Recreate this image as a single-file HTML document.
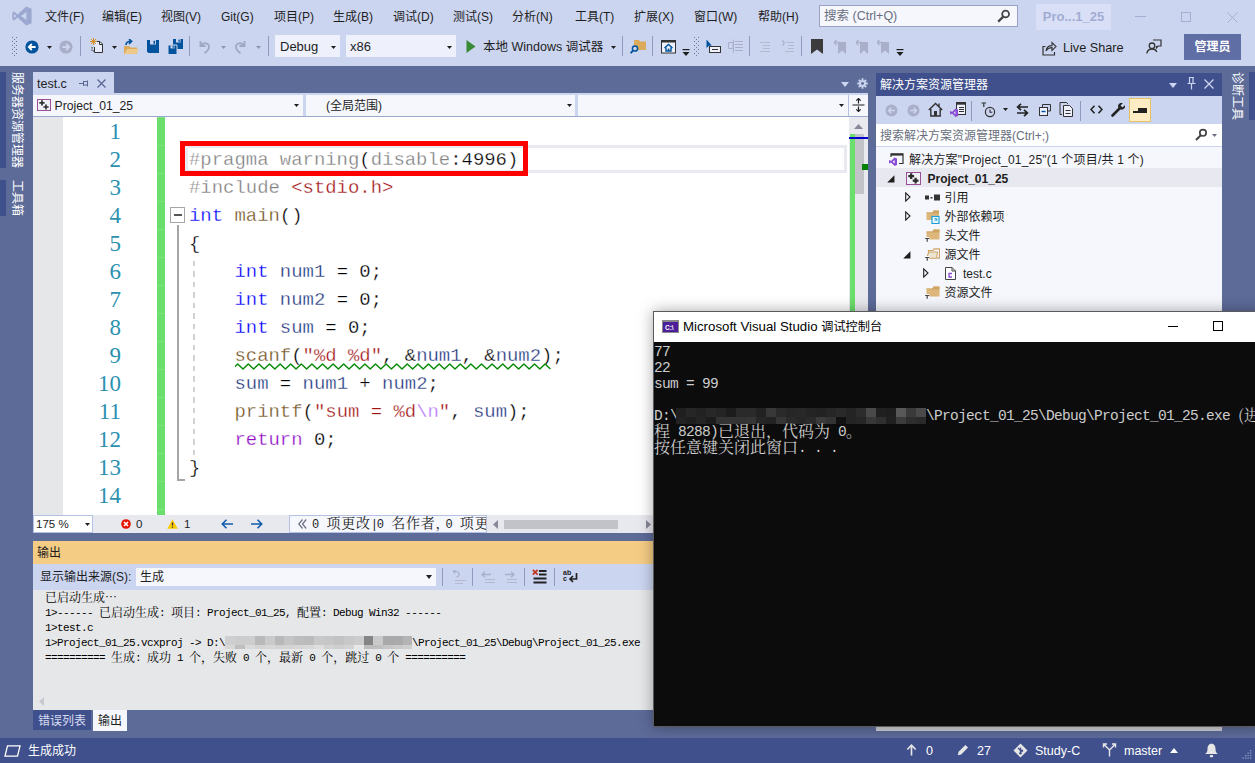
<!DOCTYPE html>
<html lang="zh-CN">
<head>
<meta charset="utf-8">
<title>Project_01_25 - Microsoft Visual Studio</title>
<style>
*{box-sizing:border-box;margin:0;padding:0}
html,body{width:1255px;height:763px;overflow:hidden}
body{position:relative;background:#5d6b99;font-family:"Liberation Sans","Noto Sans CJK SC",sans-serif;font-size:12px;color:#1e1e1e;line-height:1}
.abs{position:absolute}
.ui{font-family:"Liberation Sans","Noto Sans CJK SC",sans-serif;font-size:12px;white-space:nowrap}
/* top chrome */
#top{left:0;top:0;width:1255px;height:66px;background:#ccd5f0}
.menu{top:9px;height:16px;line-height:16px;font-size:12px;color:#1e1e1e;white-space:nowrap}
/* side strips */
.vtxt{writing-mode:vertical-rl;text-orientation:sideways;color:#fff;font-size:12px;line-height:12px;white-space:nowrap;font-family:"Noto Sans CJK SC","Liberation Sans",sans-serif}
.dark{background:#40508d}
/* editor */
#tab{left:33px;top:72px;width:81px;height:21px;background:#ccd5f0}
#nav{left:33px;top:93px;width:835px;height:24px;background:#f5f7fd;border-top:2px solid #ccd5f0;border-bottom:1px solid #9aa7cf}
#editor{left:33px;top:117px;width:816px;height:398px;background:#fff;overflow:hidden}
#margin{left:0;top:0;width:30px;height:398px;background:#e6e7e8}
#green{left:123.5px;top:0;width:8.5px;height:398px;background:repeating-linear-gradient(180deg,#80e380 0,#80e380 1px,#6bdf6b 1px,#6bdf6b 28px)}
.ln{left:40px;width:48px;text-align:right;font-family:"Liberation Serif",serif;font-size:23px;line-height:28px;height:28px;color:#2b91af}
.cl{left:156px;font-family:"Liberation Mono",monospace;font-size:18.93px;line-height:28px;height:28px;white-space:pre;color:#000;-webkit-text-stroke:0.28px #fff}
.k{color:#0000ff}.p{color:#808080}.s{color:#a31515}.f{color:#74531f}.v{color:#1f377f}.c{color:#8f08c4}.e{color:#b776fb}
.lens{font-family:"Liberation Mono",monospace;font-size:12px;line-height:17px;white-space:pre;color:#1e1e1e}
.lens b{line-height:0;font-weight:normal;font-family:"Noto Serif CJK SC",serif;font-size:14px;letter-spacing:0.8px}
.lens i{font-style:normal;display:inline-block;width:6px;text-align:center}
.lens u{text-decoration:none;margin-left:-5px}
/* output */
#outtitle{left:33px;top:541px;width:620px;height:23px;background:#f5cc84}
#outbar{left:33px;top:564px;width:620px;height:26px;background:#ccd5f0}
#outtext{left:33px;top:590px;width:620px;height:120px;background:#e6e7e8;overflow:hidden}
.ol{left:12px;margin-top:1px;font-family:"Liberation Mono",monospace;font-size:11px;letter-spacing:-0.6px;line-height:15px;height:15px;white-space:pre;color:#000}
.ol b,.con b{font-weight:normal;font-family:"Noto Serif CJK SC","Noto Sans CJK SC",serif}
.ol b{font-size:12px;line-height:0;letter-spacing:0;position:relative;top:1px}
.blur{display:inline-block;width:187px;height:13px;vertical-align:top;background:linear-gradient(90deg,#cfcfd0 0.0px,#cfcfd0 9.9px,#cccccd 9.9px,#cccccd 19.8px,#cdcdce 19.8px,#cdcdce 29.700000000000003px,#b9b9ba 29.700000000000003px,#b9b9ba 39.6px,#cacacb 39.6px,#cacacb 49.5px,#b8b8b9 49.5px,#b8b8b9 59.400000000000006px,#c4c4c5 59.400000000000006px,#c4c4c5 69.3px,#bdbdbe 69.3px,#bdbdbe 79.2px,#bbbbbc 79.2px,#bbbbbc 89.10000000000001px,#c8c8c9 89.10000000000001px,#c8c8c9 99.0px,#c6c6c7 99.0px,#c6c6c7 108.9px,#c2c2c3 108.9px,#c2c2c3 118.80000000000001px,#c8c8c9 118.80000000000001px,#c8c8c9 128.70000000000002px,#cccccd 128.70000000000002px,#cccccd 138.6px,#858586 138.6px,#858586 148.5px,#cacacb 148.5px,#cacacb 158.4px,#a9a9aa 158.4px,#a9a9aa 168.3px,#aaaaab 168.3px,#aaaaab 178.20000000000002px,#b4b4b5 178.20000000000002px,#b4b4b5 188.1px) 0 0/100% 9px no-repeat,linear-gradient(90deg,#d6d6d7 0.0px,#d6d6d7 9.9px,#bebebf 9.9px,#bebebf 19.8px,#dadadb 19.8px,#dadadb 29.700000000000003px,#d4d4d5 29.700000000000003px,#d4d4d5 39.6px,#d6d6d7 39.6px,#d6d6d7 49.5px,#d2d2d3 49.5px,#d2d2d3 59.400000000000006px,#d4d4d5 59.400000000000006px,#d4d4d5 69.3px,#d6d6d7 69.3px,#d6d6d7 79.2px,#d8d8d9 79.2px,#d8d8d9 89.10000000000001px,#dededf 89.10000000000001px,#dededf 99.0px,#d2d2d3 99.0px,#d2d2d3 108.9px,#cececf 108.9px,#cececf 118.80000000000001px,#d2d2d3 118.80000000000001px,#d2d2d3 128.70000000000002px,#e6e7e8 128.70000000000002px,#e6e7e8 138.6px,#bdbdbe 138.6px,#bdbdbe 148.5px,#bfbfc0 148.5px,#bfbfc0 158.4px,#c6c6c7 158.4px,#c6c6c7 168.3px,#cacacb 168.3px,#cacacb 178.20000000000002px,#cececf 178.20000000000002px,#cececf 188.1px) 0 9px/100% 4px no-repeat}
/* console */
#con{left:653px;top:311px;width:610px;height:416px;background:#0c0c0c;border:1px solid #5a5a5a;box-shadow:0 0 14px rgba(0,0,0,.35)}
#contitle{left:0;top:0;width:608px;height:30px;background:#fff}
.con{left:0;font-family:"Liberation Mono",monospace;font-size:14.5px;letter-spacing:-0.7px;line-height:16px;height:16px;white-space:pre;color:#cccccc}
.con b{font-size:16px;line-height:0;letter-spacing:0;position:relative;top:1px}
.cblur{display:inline-block;width:250px;margin-left:-2px;height:16px;vertical-align:top;background:linear-gradient(90deg,#1f1f1f 0px,#1f1f1f 10px,#262626 10px,#262626 20px,#222 20px,#222 30px,#282828 30px,#282828 40px,#242424 40px,#242424 50px,#1c1c1c 50px,#1c1c1c 60px,#2a2a2a 60px,#2a2a2a 70px,#2a2a2a 70px,#2a2a2a 80px,#222 80px,#222 90px,#383838 90px,#383838 100px,#2a2a2a 100px,#2a2a2a 110px,#262626 110px,#262626 120px,#282828 120px,#282828 130px,#242424 130px,#242424 140px,#222 140px,#222 150px,#262626 150px,#262626 160px,#2a2a2a 160px,#2a2a2a 170px,#242424 170px,#242424 180px,#2c2c2c 180px,#2c2c2c 190px,#4a4a4a 190px,#4a4a4a 200px,#202020 200px,#202020 210px,#1e1e1e 210px,#1e1e1e 220px,#585858 220px,#585858 230px,#3a3a3a 230px,#3a3a3a 240px,#4a4a4a 240px,#4a4a4a 250px) 0 0/100% 9px no-repeat,linear-gradient(90deg,#222 0px,#222 10px,#1e1e1e 10px,#1e1e1e 20px,#242424 20px,#242424 30px,#1c1c1c 30px,#1c1c1c 40px,#333 40px,#333 50px,#343434 50px,#343434 60px,#333 60px,#333 70px,#353535 70px,#353535 80px,#262626 80px,#262626 90px,#222 90px,#222 100px,#363636 100px,#363636 110px,#2a2a2a 110px,#2a2a2a 120px,#262626 120px,#262626 130px,#2a2a2a 130px,#2a2a2a 140px,#3a3a3a 140px,#3a3a3a 150px,#333 150px,#333 160px,#111 160px,#111 170px,#242424 170px,#242424 180px,#262626 180px,#262626 190px,#383838 190px,#383838 200px,#303030 200px,#303030 210px,#202020 210px,#202020 220px,#3c3c3c 220px,#3c3c3c 230px,#2e2e2e 230px,#2e2e2e 240px,#2a2a2a 240px,#2a2a2a 250px) 0 9px/100% 7px no-repeat}
/* status */
#status{left:0;top:738px;width:1255px;height:25px;background:#40508d;color:#fff}
</style>
</head>
<body>
<div id="top" class="abs">
<svg class="abs" style="left:12px;top:6px" width="20" height="20" viewBox="0 0 20 20"><path d="M14.2 0.6 L19.6 2.8 V17.2 L14.2 19.4 L5.6 11.6 L2 14.4 L0.4 13.6 V6.4 L2 5.6 L5.6 8.4 Z M14.4 6 L9.2 10 L14.4 14 Z M2.2 8 V12 L4.3 10 Z" fill="#9ca8cf" fill-rule="evenodd"/></svg>
<div class="abs menu" style="left:45px">文件(F)</div><div class="abs menu" style="left:102px">编辑(E)</div><div class="abs menu" style="left:161px">视图(V)</div><div class="abs menu" style="left:221px">Git(G)</div><div class="abs menu" style="left:274px">项目(P)</div><div class="abs menu" style="left:333px">生成(B)</div><div class="abs menu" style="left:393px">调试(D)</div><div class="abs menu" style="left:453px">测试(S)</div><div class="abs menu" style="left:512px">分析(N)</div><div class="abs menu" style="left:575px">工具(T)</div><div class="abs menu" style="left:634px">扩展(X)</div><div class="abs menu" style="left:694px">窗口(W)</div><div class="abs menu" style="left:758px">帮助(H)</div>
<div class="abs" style="left:819px;top:5px;width:199px;height:22px;background:#f5f7fd;border:1px solid #98a3c4"></div>
<div class="abs ui" style="left:824px;top:9px;font-size:12.5px;line-height:15px;color:#6a6f80">搜索 (Ctrl+Q)</div>
<svg class="abs" style="left:997px;top:9px" width="14" height="14" viewBox="0 0 14 14"><circle cx="8.6" cy="5" r="3.4" fill="none" stroke="#444" stroke-width="1.8"/><path d="M6.2 7.6 L1.2 12.6" stroke="#444" stroke-width="2.2"/></svg>
<div class="abs ui" style="left:1036px;top:4px;width:75px;height:26px;background:#d8dff7;color:#a2acd2;font-weight:bold;font-size:13px;line-height:26px;text-align:center">Pro...1_25</div>
<div class="abs" style="left:1135px;top:16px;width:11px;height:1px;background:#a4aed0"></div>
<div class="abs" style="left:1181px;top:12px;width:10px;height:10px;border:1px solid #a4aed0"></div>
<svg class="abs" style="left:1227px;top:12px" width="11" height="11" viewBox="0 0 11 11"><path d="M0.5 0.5 L10.5 10.5 M10.5 0.5 L0.5 10.5" stroke="#a4aed0" stroke-width="1"/></svg>
<svg class="abs" style="left:12px;top:37px" width="5" height="19" viewBox="0 0 5 19"><rect x="0" y="0" width="1" height="1" fill="#6a7497"/><rect x="4" y="0" width="1" height="1" fill="#6a7497"/><rect x="2" y="2" width="1" height="1" fill="#6a7497"/><rect x="0" y="4" width="1" height="1" fill="#6a7497"/><rect x="4" y="4" width="1" height="1" fill="#6a7497"/><rect x="2" y="6" width="1" height="1" fill="#6a7497"/><rect x="0" y="8" width="1" height="1" fill="#6a7497"/><rect x="4" y="8" width="1" height="1" fill="#6a7497"/><rect x="2" y="10" width="1" height="1" fill="#6a7497"/><rect x="0" y="12" width="1" height="1" fill="#6a7497"/><rect x="4" y="12" width="1" height="1" fill="#6a7497"/><rect x="2" y="14" width="1" height="1" fill="#6a7497"/><rect x="0" y="16" width="1" height="1" fill="#6a7497"/><rect x="4" y="16" width="1" height="1" fill="#6a7497"/><rect x="2" y="18" width="1" height="1" fill="#6a7497"/></svg><svg class="abs" style="left:25px;top:40px" width="14" height="14" viewBox="0 0 14 14"><circle cx="7" cy="7" r="6.6" fill="#00539c"/><path d="M10.6 7 H4.2 M6.8 4 L3.8 7 L6.8 10" stroke="#fff" stroke-width="1.8" fill="none"/></svg><svg class="abs" style="left:47px;top:46px" width="5" height="3" viewBox="0 0 5 3"><path d="M0 0 H5 L2.5 3 Z" fill="#1e1e1e"/></svg><svg class="abs" style="left:59px;top:40px" width="14" height="14" viewBox="0 0 14 14"><circle cx="7" cy="7" r="6.6" fill="#a9afc8"/><path d="M3.4 7 H9.8 M7.2 4 L10.2 7 L7.2 10" stroke="#ccd5f0" stroke-width="1.8" fill="none"/></svg><div class="abs" style="left:80px;top:36px;width:1px;height:20px;background:#8e9bbc"></div><svg class="abs" style="left:90px;top:38px" width="14" height="16" viewBox="0 0 14 16"><path d="M5.5 3.5 H10 L12.5 6 V14.5 H4.5 V9" fill="#e8ecfa" stroke="#333" stroke-width="1"/><path d="M9.5 3.5 V6.5 H12.5" fill="none" stroke="#333"/><path d="M2 9 V13 H4" fill="none" stroke="#333" stroke-dasharray="1.5 1"/><path d="M3.5 0 V7 M0 3.5 H7 M1 1 L6 6 M6 1 L1 6" stroke="#d8912a" stroke-width="1"/></svg><svg class="abs" style="left:112px;top:46px" width="5" height="3" viewBox="0 0 5 3"><path d="M0 0 H5 L2.5 3 Z" fill="#1e1e1e"/></svg><svg class="abs" style="left:123px;top:39px" width="16" height="16" viewBox="0 0 16 16"><path d="M1 7 H6 L7.5 8.5 H14 V15 H1 Z" fill="#dcaa5b"/><path d="M1.5 15 L4 10 H15.5 L13.5 15 Z" fill="#efc98a"/><path d="M3 6 C3 3 5 2.2 8 2.2 M6 0 L8.6 2.3 L6 4.8" fill="none" stroke="#00539c" stroke-width="1.6"/></svg><svg class="abs" style="left:147px;top:40px" width="12" height="13" viewBox="0 0 12 13"><path d="M0 0 H12 V13 H1.5 L0 11.5 Z" fill="#00539c"/><rect x="3" y="0" width="6" height="4.5" fill="#ccd5f0"/><rect x="6.5" y="0.8" width="1.6" height="3" fill="#00539c"/></svg><svg class="abs" style="left:168px;top:39px" width="15" height="16" viewBox="0 0 15 16"><path d="M5 0 H15 V10 H6.2 L5 8.8 Z" fill="#00539c"/><rect x="8" y="0" width="4.5" height="3.5" fill="#ccd5f0"/><rect x="10.4" y="0.6" width="1.3" height="2.3" fill="#00539c"/><path d="M0 6 H9 V15.5 H1.2 L0 14.3 Z" fill="#00539c" stroke="#ccd5f0" stroke-width="1"/><rect x="2.5" y="6.4" width="4" height="3" fill="#ccd5f0"/><rect x="4.6" y="6.8" width="1.2" height="2" fill="#00539c"/></svg><div class="abs" style="left:189px;top:36px;width:1px;height:20px;background:#8e9bbc"></div><svg class="abs" style="left:199px;top:40px" width="12" height="14" viewBox="0 0 12 14"><path d="M1.5 1 V6 H6.5 M1.8 5.6 C4 2 10.5 2.5 10 7.5 C9.7 10 8 11.5 5.5 13.2" fill="none" stroke="#a0a7c2" stroke-width="1.8"/></svg><svg class="abs" style="left:221px;top:46px" width="5" height="3" viewBox="0 0 5 3"><path d="M0 0 H5 L2.5 3 Z" fill="#8d94b0"/></svg><svg class="abs" style="left:234px;top:40px" width="12" height="14" viewBox="0 0 12 14"><path d="M10.5 1 V6 H5.5 M10.2 5.6 C8 2 1.5 2.5 2 7.5 C2.3 10 4 11.5 6.5 13.2" fill="none" stroke="#a0a7c2" stroke-width="1.8"/></svg><svg class="abs" style="left:256px;top:46px" width="5" height="3" viewBox="0 0 5 3"><path d="M0 0 H5 L2.5 3 Z" fill="#8d94b0"/></svg><div class="abs" style="left:268px;top:36px;width:1px;height:20px;background:#8e9bbc"></div><div class="abs ui" style="left:275px;top:35px;width:65px;height:22px;background:#eef1fc;font-size:13px;line-height:24px;padding-left:5px;color:#1e1e1e">Debug</div><svg class="abs" style="left:331px;top:46px" width="5" height="3" viewBox="0 0 5 3"><path d="M0 0 H5 L2.5 3 Z" fill="#1e1e1e"/></svg><div class="abs ui" style="left:346px;top:35px;width:110px;height:22px;background:#eef1fc;font-size:13px;line-height:24px;padding-left:4px;color:#1e1e1e">x86</div><svg class="abs" style="left:447px;top:46px" width="5" height="3" viewBox="0 0 5 3"><path d="M0 0 H5 L2.5 3 Z" fill="#1e1e1e"/></svg><svg class="abs" style="left:466px;top:40px" width="10" height="13" viewBox="0 0 10 13"><path d="M0.5 0 L9.5 6.5 L0.5 13 Z" fill="#388a34"/></svg><div class="abs ui" style="left:483px;top:39px;font-size:12.5px;line-height:17px;color:#1e1e1e">本地 Windows 调试器</div><svg class="abs" style="left:611px;top:46px" width="5" height="3" viewBox="0 0 5 3"><path d="M0 0 H5 L2.5 3 Z" fill="#1e1e1e"/></svg><div class="abs" style="left:622px;top:36px;width:1px;height:20px;background:#8e9bbc"></div><svg class="abs" style="left:630px;top:39px" width="16" height="16" viewBox="0 0 16 16"><path d="M4 1 H9 L10 2.5 H16 V11 H4 Z" fill="#dcaa5b"/><circle cx="5" cy="9.5" r="2.6" fill="#ccd5f0" stroke="#00539c" stroke-width="1.5"/><path d="M3.2 11.3 L0.6 14.2" stroke="#00539c" stroke-width="1.8"/></svg><div class="abs" style="left:652px;top:36px;width:1px;height:20px;background:#8e9bbc"></div><svg class="abs" style="left:661px;top:40px" width="15" height="14" viewBox="0 0 15 14"><rect x="0.5" y="0.5" width="14" height="12.5" fill="#eef1fc" stroke="#333"/><rect x="0.5" y="0.5" width="14" height="2" fill="#333"/><path d="M3.5 8 L7.5 4.5 L11.5 8 M5 7.5 V11 H10 V7.5" fill="none" stroke="#00539c" stroke-width="1.4"/><rect x="6.8" y="8.6" width="1.6" height="2.4" fill="#00539c"/></svg><svg class="abs" style="left:682px;top:49px" width="8" height="7" viewBox="0 0 8 7"><rect x="0.5" y="0" width="7" height="1.2" fill="#1e1e1e"/><path d="M0.5 3 H7.5 L4 7 Z" fill="#1e1e1e"/></svg><svg class="abs" style="left:694px;top:37px" width="5" height="19" viewBox="0 0 5 19"><rect x="0" y="0" width="1" height="1" fill="#6a7497"/><rect x="4" y="0" width="1" height="1" fill="#6a7497"/><rect x="2" y="2" width="1" height="1" fill="#6a7497"/><rect x="0" y="4" width="1" height="1" fill="#6a7497"/><rect x="4" y="4" width="1" height="1" fill="#6a7497"/><rect x="2" y="6" width="1" height="1" fill="#6a7497"/><rect x="0" y="8" width="1" height="1" fill="#6a7497"/><rect x="4" y="8" width="1" height="1" fill="#6a7497"/><rect x="2" y="10" width="1" height="1" fill="#6a7497"/><rect x="0" y="12" width="1" height="1" fill="#6a7497"/><rect x="4" y="12" width="1" height="1" fill="#6a7497"/><rect x="2" y="14" width="1" height="1" fill="#6a7497"/><rect x="0" y="16" width="1" height="1" fill="#6a7497"/><rect x="4" y="16" width="1" height="1" fill="#6a7497"/><rect x="2" y="18" width="1" height="1" fill="#6a7497"/></svg><svg class="abs" style="left:706px;top:39px" width="15" height="15" viewBox="0 0 15 15"><rect x="3.5" y="7.5" width="11" height="6" fill="#eef1fc" stroke="#333"/><path d="M0.5 0.5 V9 L3 6.8 L5.8 6.5 Z" fill="#00539c"/><path d="M6 10.5 H12" stroke="#333"/></svg><svg class="abs" style="left:728px;top:39px" width="15" height="15" viewBox="0 0 15 15"><path d="M0.5 3.5 H5 V9.5 H0.5 Z M5.5 0.5 V14" fill="none" stroke="#a9afc8"/><path d="M7 2.5 H15 M7 5.5 H15 M7 8.5 H15 M7 11.5 H15" stroke="#a9afc8"/></svg><div class="abs" style="left:749px;top:36px;width:1px;height:20px;background:#8e9bbc"></div><svg class="abs" style="left:759px;top:41px" width="12" height="12" viewBox="0 0 12 12"><path d="M1 1.5 H11 M4 4.5 H11 M4 7.5 H11 M1 10.5 H11" stroke="#b3b9cf"/></svg><svg class="abs" style="left:781px;top:40px" width="13" height="13" viewBox="0 0 13 13"><path d="M5 2.5 H13 M7 5.5 H13 M7 8.5 H13 M4 11.5 H13" stroke="#b3b9cf"/><path d="M1 1 C3.5 1 4 3.5 1.5 5.5" fill="none" stroke="#a9afc8" stroke-width="1.3"/></svg><div class="abs" style="left:801px;top:36px;width:1px;height:20px;background:#8e9bbc"></div><svg class="abs" style="left:811px;top:39px" width="12" height="15" viewBox="0 0 12 15"><path d="M0 0 H12 V15 L6 10.5 L0 15 Z" fill="#3b3b3b"/></svg><svg class="abs" style="left:834px;top:39px" width="12" height="15" viewBox="0 0 12 15"><path d="M4 3 H12 V15 L8 11.5 L4 15 Z" fill="#a9afc8"/><path d="M0 3.5 H6 M2.5 1 L0 3.5 L2.5 6" fill="none" stroke="#a9afc8" stroke-width="1.3"/></svg><svg class="abs" style="left:856px;top:39px" width="12" height="15" viewBox="0 0 12 15"><path d="M4 3 H12 V15 L8 11.5 L4 15 Z" fill="#a9afc8"/><path d="M0 3.5 H6 M2.5 1 L0 3.5 L2.5 6" fill="none" stroke="#a9afc8" stroke-width="1.3"/></svg><svg class="abs" style="left:877px;top:39px" width="12" height="15" viewBox="0 0 12 15"><path d="M4 3 H12 V15 L8 11.5 L4 15 Z" fill="#a9afc8"/><path d="M0 3.5 H6 M2.5 1 L0 3.5 L2.5 6" fill="none" stroke="#a9afc8" stroke-width="1.3"/></svg><svg class="abs" style="left:896px;top:49px" width="8" height="7" viewBox="0 0 8 7"><rect x="0.5" y="0" width="7" height="1.2" fill="#1e1e1e"/><path d="M0.5 3 H7.5 L4 7 Z" fill="#1e1e1e"/></svg><svg class="abs" style="left:1042px;top:41px" width="15" height="15" viewBox="0 0 15 15"><path d="M3.5 5.5 H1 V14 H12.5 V11" fill="none" stroke="#333" stroke-width="1.2"/><path d="M4 10 C4.5 6 7 4.6 10 4.6 V1.6 L14 5.6 L10 9.4 V6.6 C7.5 6.6 5.5 7.4 4 10 Z" fill="none" stroke="#333" stroke-width="1.1"/></svg><div class="abs ui" style="left:1063px;top:40px;font-size:12.7px;line-height:17px;color:#1e1e1e">Live Share</div><svg class="abs" style="left:1146px;top:39px" width="16" height="15" viewBox="0 0 16 15"><path d="M7 1 H15 V7 H12 L10.5 8.8 V7" fill="none" stroke="#333" stroke-width="1.2"/><circle cx="6" cy="6.8" r="2.8" fill="none" stroke="#333" stroke-width="1.3"/><path d="M0.8 14.5 C1.5 10.5 4 10 6 10 C8 10 10 10.5 10.8 13" fill="none" stroke="#333" stroke-width="1.3"/></svg><div class="abs ui" style="left:1184px;top:34px;width:57px;height:26px;background:#5f6ea5;color:#fff;font-weight:bold;font-size:12px;line-height:26px;text-align:center">管理员</div>
</div>
<div class="abs dark" style="left:0;top:72px;width:6px;height:96px"></div>
<div class="abs vtxt" style="left:12px;top:72px;width:12px">服务器资源管理器</div>
<div class="abs dark" style="left:0;top:180px;width:6px;height:36px"></div>
<div class="abs vtxt" style="left:12px;top:180px;width:12px">工具箱</div>
<div class="abs dark" style="left:1249px;top:72px;width:6px;height:48px"></div>
<div class="abs vtxt" style="left:1232px;top:72px;width:12px">诊断工具</div>
<div id="tab" class="abs"><div class="abs ui" style="left:4px;top:4.5px;line-height:15px;font-size:12.5px;color:#1e1e1e">test.c</div>
<svg class="abs" style="left:46px;top:8px" width="9" height="7" viewBox="0 0 9 7"><path d="M0 3.5 H4 M4.5 1 V6 M4.5 1.5 H8.5 V5 H4.5 M8.5 0.5 V6.5" fill="none" stroke="#5a6796" stroke-width="1"/></svg>
<svg class="abs" style="left:64px;top:7px" width="9" height="9" viewBox="0 0 9 9"><path d="M0.5 0.5 L8.5 8.5 M8.5 0.5 L0.5 8.5" stroke="#5a6796" stroke-width="1.3"/></svg>
</div>
<svg class="abs" style="left:841px;top:82px" width="8" height="5" viewBox="0 0 8 5"><path d="M0 0 H8 L4 5 Z" fill="#ccd5f0"/></svg>
<svg class="abs" style="left:857px;top:78px" width="11" height="11" viewBox="0 0 12 12"><g stroke="#ccd5f0" stroke-width="2"><path d="M6 0.3 V11.7 M0.3 6 H11.7 M2 2 L10 10 M10 2 L2 10"/></g><circle cx="6" cy="6" r="3.6" fill="#ccd5f0"/><circle cx="6" cy="6" r="1.6" fill="#5d6b99"/></svg>

<div id="nav" class="abs">
<svg class="abs" style="left:4px;top:4px" width="14" height="12" viewBox="0 0 14 12"><rect x="0.5" y="0.5" width="13" height="11" fill="#f0f0f8" stroke="#9b4f96"/><path d="M5 1.2 V6.4 M2.4 3.8 H7.6 M9 5.4 V10.6 M6.4 8 H11.6" stroke="#333" stroke-width="1.7"/><rect x="6.2" y="5" width="1.6" height="1.6" fill="#f0f0f8"/></svg>
<div class="abs ui" style="left:21.5px;top:3px;line-height:16px;font-size:12.2px">Project_01_25</div>
<svg class="abs" style="left:261px;top:9px" width="5" height="3" viewBox="0 0 5 3"><path d="M0 0 H5 L2.5 3 Z" fill="#1e1e1e"/></svg>
<div class="abs" style="left:270px;top:0;width:3px;height:21px;background:#ccd5f0"></div>
<div class="abs ui" style="left:293px;top:2.5px;line-height:16px">(全局范围)</div>
<svg class="abs" style="left:534px;top:9px" width="5" height="3" viewBox="0 0 5 3"><path d="M0 0 H5 L2.5 3 Z" fill="#1e1e1e"/></svg>
<div class="abs" style="left:542px;top:0;width:3px;height:21px;background:#ccd5f0"></div>
<svg class="abs" style="left:806px;top:9px" width="5" height="3" viewBox="0 0 5 3"><path d="M0 0 H5 L2.5 3 Z" fill="#1e1e1e"/></svg>
<div class="abs" style="left:815px;top:0;width:1px;height:21px;background:#b4c0e4"></div>
<svg class="abs" style="left:819px;top:3px" width="13" height="14" viewBox="0 0 13 14"><path d="M0.5 7 H12.5 M6.5 0.5 V5.5 M6.5 8.5 V13.5 M4.3 2.7 L6.5 0.5 L8.7 2.7 M4.3 11.3 L6.5 13.5 L8.7 11.3" fill="none" stroke="#1e1e1e" stroke-width="1.2"/></svg>
</div>
<div id="editor" class="abs">
  <div id="margin" class="abs"></div>
  <div id="green" class="abs"></div>
<div class="abs ln" style="top:1px">1</div>
<div class="abs ln" style="top:29px">2</div><div class="abs cl" style="top:29px"><span class="p">#pragma warning</span>(<span class="p">disable</span>:4996)</div>
<div class="abs ln" style="top:57px">3</div><div class="abs cl" style="top:57px"><span class="p">#include</span> <span class="s">&lt;stdio.h&gt;</span></div>
<div class="abs ln" style="top:85px">4</div><div class="abs cl" style="top:85px"><span class="k">int</span> <span class="f">main</span>()</div>
<div class="abs ln" style="top:113px">5</div><div class="abs cl" style="top:113px">{</div>
<div class="abs ln" style="top:141px">6</div><div class="abs cl" style="top:141px">    <span class="k">int</span> <span class="v">num1</span> = 0;</div>
<div class="abs ln" style="top:169px">7</div><div class="abs cl" style="top:169px">    <span class="k">int</span> <span class="v">num2</span> = 0;</div>
<div class="abs ln" style="top:197px">8</div><div class="abs cl" style="top:197px">    <span class="k">int</span> <span class="v">sum</span> = 0;</div>
<div class="abs ln" style="top:225px">9</div><div class="abs cl" style="top:225px">    <span class="f">scanf</span>(<span class="s">"%d %d"</span>, &amp;<span class="v">num1</span>, &amp;<span class="v">num2</span>);</div>
<div class="abs ln" style="top:253px">10</div><div class="abs cl" style="top:253px">    <span class="v">sum</span> = <span class="v">num1</span> + <span class="v">num2</span>;</div>
<div class="abs ln" style="top:281px">11</div><div class="abs cl" style="top:281px">    <span class="f">printf</span>(<span class="s">"sum = %d<span class="e">\n</span>"</span>, <span class="v">sum</span>);</div>
<div class="abs ln" style="top:309px">12</div><div class="abs cl" style="top:309px">    <span class="c">return</span> 0;</div>
<div class="abs ln" style="top:337px">13</div><div class="abs cl" style="top:337px">}</div>
<div class="abs ln" style="top:365px">14</div>
<div class="abs" style="left:152px;top:28px;width:662px;height:28px;border:3px solid #e8e9f1"></div>
<div class="abs" style="left:147px;top:24px;width:348px;height:35px;border:5px solid #ff0000"></div>
<div class="abs" style="left:137px;top:90px;width:15px;height:16px;border:1.5px solid #a5a5a5;background:#fff"></div><div class="abs" style="left:141px;top:97px;width:8px;height:2px;background:#555"></div>
<div class="abs" style="left:144px;top:108px;width:2px;height:255.5px;background:#a5a5a5"></div><div class="abs" style="left:144px;top:361.5px;width:8px;height:2px;background:#a5a5a5"></div>
<div class="abs" style="left:160px;top:143.5px;width:2px;height:194px;background:repeating-linear-gradient(180deg,#d2d2d2 0,#d2d2d2 5.25px,transparent 5.25px,transparent 10.5px)"></div>
<svg class="abs" style="left:202px;top:246px" width="316" height="7" viewBox="0 0 316 7"><path d="M-2.6 6.0 L2.7 1.0 L8.0 6.0 L13.3 1.0 L18.6 6.0 L23.9 1.0 L29.2 6.0 L34.5 1.0 L39.8 6.0 L45.1 1.0 L50.4 6.0 L55.7 1.0 L61.0 6.0 L66.3 1.0 L71.6 6.0 L76.9 1.0 L82.2 6.0 L87.5 1.0 L92.8 6.0 L98.1 1.0 L103.4 6.0 L108.7 1.0 L114.0 6.0 L119.3 1.0 L124.6 6.0 L129.9 1.0 L135.2 6.0 L140.5 1.0 L145.8 6.0 L151.1 1.0 L156.4 6.0 L161.7 1.0 L167.0 6.0 L172.3 1.0 L177.6 6.0 L182.9 1.0 L188.2 6.0 L193.5 1.0 L198.8 6.0 L204.1 1.0 L209.4 6.0 L214.7 1.0 L220.0 6.0 L225.3 1.0 L230.6 6.0 L235.9 1.0 L241.2 6.0 L246.5 1.0 L251.8 6.0 L257.1 1.0 L262.4 6.0 L267.7 1.0 L273.0 6.0 L278.3 1.0 L283.6 6.0 L288.9 1.0 L294.2 6.0 L299.5 1.0 L304.8 6.0 L310.1 1.0 L315.4 6.0" fill="none" stroke="#0a8a0a" stroke-width="1.5" stroke-linejoin="round"/></svg>
</div>
<div class="abs" style="left:33px;top:515px;width:835px;height:18px;background:#e8e8ef">
<div class="abs ui" style="left:0;top:0;width:60px;height:18px;background:#fff;border:1px solid #b4c0e4;line-height:16px;padding-left:2px;font-size:11.5px">175 %</div>
<svg class="abs" style="left:52px;top:8px" width="5" height="3" viewBox="0 0 5 3"><path d="M0 0 H5 L2.5 3 Z" fill="#1e1e1e"/></svg>
<svg class="abs" style="left:88px;top:4px" width="10" height="10" viewBox="0 0 10 10"><circle cx="5" cy="5" r="4.8" fill="#e51400"/><path d="M3 3 L7 7 M7 3 L3 7" stroke="#fff" stroke-width="1.6"/></svg>
<div class="abs ui" style="left:103px;top:1px;line-height:16px;font-size:11.5px">0</div>
<svg class="abs" style="left:134px;top:4px" width="11" height="10" viewBox="0 0 11 10"><path d="M5.5 0.3 L10.8 9.7 H0.2 Z" fill="#ffcc00"/><path d="M5.5 3.5 V6.5 M5.5 7.5 V8.7" stroke="#333" stroke-width="1.3"/></svg>
<div class="abs ui" style="left:151px;top:1px;line-height:16px;font-size:11.5px">1</div>
<svg class="abs" style="left:188px;top:4px" width="13" height="10" viewBox="0 0 13 10"><path d="M12 5 H1.5 M5.5 0.8 L1.3 5 L5.5 9.2" fill="none" stroke="#0f5eac" stroke-width="1.6"/></svg>
<svg class="abs" style="left:217px;top:4px" width="13" height="10" viewBox="0 0 13 10"><path d="M1 5 H11.5 M7.5 0.8 L11.7 5 L7.5 9.2" fill="none" stroke="#0f5eac" stroke-width="1.6"/></svg>
<div class="abs" style="left:256px;top:0;width:198px;height:18px;background:#f5f7fd;border:1px solid #b4c0e4;overflow:hidden">
<svg class="abs" style="left:8px;top:3px" width="9" height="10" viewBox="0 0 9 10"><path d="M4.5 0.5 L0.8 5 L4.5 9.5 M8.2 0.5 L4.5 5 L8.2 9.5" fill="none" stroke="#6a6f80" stroke-width="1.2"/></svg>
<div class="abs lens" style="left:22px;top:1px">0 <b>项更改</b><i>|</i>0 <b>名作者，</b><u>0</u> <b>项更改</b></div>
</div>
<svg class="abs" style="left:460px;top:5px" width="5" height="9" viewBox="0 0 5 9"><path d="M5 0 V9 L0 4.5 Z" fill="#868999"/></svg>
<div class="abs" style="left:471px;top:5px;width:114px;height:9px;background:#c2c3c9"></div>
<svg class="abs" style="left:613px;top:5px" width="5" height="9" viewBox="0 0 5 9"><path d="M0 0 V9 L5 4.5 Z" fill="#868999"/></svg>
</div>
<div class="abs" style="left:849px;top:117px;width:19px;height:398px;background:#e8e8ef">
<svg class="abs" style="left:5px;top:7px" width="9" height="5" viewBox="0 0 9 5"><path d="M0 5 H9 L4.5 0 Z" fill="#868999"/></svg>
<div class="abs" style="left:1px;top:17px;width:5px;height:381px;background:#6bdf6b"></div>
<div class="abs" style="left:6px;top:17px;width:9px;height:60px;background:#c2c3c9"></div>
<div class="abs" style="left:0;top:20px;width:19px;height:2px;background:#0000cd"></div>
<div class="abs" style="left:13px;top:47px;width:6px;height:6px;background:#008000"></div>
</div>
<div id="outtitle" class="abs"><div class="abs ui" style="left:4px;top:4px;line-height:16px;color:#1e1e1e">输出</div></div>
<div id="outbar" class="abs">
<div class="abs ui" style="left:7px;top:5px;line-height:16px">显示输出来源(S):</div>
<div class="abs ui" style="left:103px;top:4px;width:300px;height:18px;background:#f5f7fd;line-height:18px;padding-left:4px">生成</div>
<svg class="abs" style="left:393px;top:11px" width="6" height="4" viewBox="0 0 6 4"><path d="M0 0 H6 L3 4 Z" fill="#1e1e1e"/></svg>
<div class="abs" style="left:409px;top:4px;width:1px;height:18px;background:#8e9bbc"></div>
<svg class="abs" style="left:419px;top:6px" width="14" height="14" viewBox="0 0 14 14"><path d="M3 10.5 H14 M3 13.5 H11" stroke="#b3b9cf" stroke-width="1.2"/><path d="M4.5 7 C8 7 8 1.5 4 1.5 H1.5 M3.5 0 L1.2 1.6 L3.5 3.4" fill="none" stroke="#a9afc8" stroke-width="1.2"/></svg>
<div class="abs" style="left:439px;top:4px;width:1px;height:18px;background:#8e9bbc"></div>
<svg class="abs" style="left:448px;top:7px" width="14" height="13" viewBox="0 0 14 13"><path d="M1 3.5 H10 M4 0.8 L1 3.5 L4 6.2" fill="none" stroke="#a9afc8" stroke-width="1.3"/><path d="M4 8.5 H14 M4 11.5 H14" stroke="#b3b9cf" stroke-width="1.2"/></svg>
<svg class="abs" style="left:471px;top:7px" width="14" height="13" viewBox="0 0 14 13"><path d="M1 3.5 H10 M7 0.8 L10 3.5 L7 6.2" fill="none" stroke="#a9afc8" stroke-width="1.3"/><path d="M3 8.5 H13 M3 11.5 H13" stroke="#b3b9cf" stroke-width="1.2"/></svg>
<div class="abs" style="left:491px;top:4px;width:1px;height:18px;background:#8e9bbc"></div>
<svg class="abs" style="left:499px;top:5px" width="15" height="15" viewBox="0 0 15 15"><path d="M7 2 H14.5 M7 5.5 H14.5 M1.5 9.5 H14.5 M1.5 13.5 H14.5" stroke="#222" stroke-width="1.8"/><path d="M0.8 0.8 L5.6 5.6 M5.6 0.8 L0.8 5.6" stroke="#c0391e" stroke-width="1.8"/></svg>
<div class="abs" style="left:521px;top:4px;width:1px;height:18px;background:#8e9bbc"></div>
<svg class="abs" style="left:530px;top:6px" width="15" height="14" viewBox="0 0 15 14"><path d="M13.5 3 V9 H7.5 M10 6 L7 9 L10 12" fill="none" stroke="#222" stroke-width="1.7"/></svg>
<div class="abs" style="left:530px;top:6px;font-family:'Liberation Sans',sans-serif;font-weight:bold;font-size:7px;line-height:6px;color:#222">ab<br>c</div>
</div>
<div id="outtext" class="abs">
<div class="abs ol" style="top:0"><b>已启动生成…</b></div>
<div class="abs ol" style="top:15px">1&gt;------ <b>已启动生成</b>: <b>项目</b>: Project_01_25, <b>配置</b>: Debug Win32 ------</div>
<div class="abs ol" style="top:30px">1&gt;test.c</div>
<div class="abs ol" style="top:45px">1&gt;Project_01_25.vcxproj -&gt; D:\<span class="blur" style="width:187px"></span>\Project_01_25\Debug\Project_01_25.exe</div>
<div class="abs ol" style="top:60px">========== <b>生成</b>: <b>成功</b> 1 <b>个，失败</b> 0 <b>个，最新</b> 0 <b>个，跳过</b> 0 <b>个</b> ==========</div>
<svg class="abs" style="left:6px;top:107px" width="5" height="9" viewBox="0 0 5 9"><path d="M5 0 V9 L0 4.5 Z" fill="#c8c9d0"/></svg>
</div>
<div class="abs ui dark" style="left:33px;top:710px;width:58px;height:20px;color:#d7dcf0;line-height:22px;padding-left:5px">错误列表</div>
<div class="abs ui" style="left:93px;top:710px;width:34px;height:21px;background:#f5f7fd;color:#1e1e1e;line-height:22px;padding-left:5px">输出</div>
<div class="abs" style="left:876px;top:73px;width:346px;height:658px;background:#f5f7fd">
<div class="abs dark" style="left:0;top:0;width:346px;height:23px"></div>
<div class="abs ui" style="left:4px;top:4px;line-height:16px;color:#fff">解决方案资源管理器</div>
<svg class="abs" style="left:293px;top:10px" width="8" height="5" viewBox="0 0 8 5"><path d="M0 0 H8 L4 5 Z" fill="#ccd5f0"/></svg>
<svg class="abs" style="left:311px;top:4px" width="9" height="13" viewBox="0 0 9 13"><path d="M2 0.5 H7 M2.5 0.5 V6.5 M6 0.5 V6.5 M0.5 6.5 H8.5 M4.5 6.5 V12.5" fill="none" stroke="#ccd5f0" stroke-width="1.2"/></svg>
<svg class="abs" style="left:328px;top:6px" width="10" height="10" viewBox="0 0 10 10"><path d="M0.5 0.5 L9.5 9.5 M9.5 0.5 L0.5 9.5" stroke="#ccd5f0" stroke-width="1.3"/></svg>
<div class="abs" style="left:0;top:23px;width:346px;height:28px;background:#ccd5f0"></div>
<svg class="abs" style="left:9px;top:31px" width="13" height="13" viewBox="0 0 13 13"><circle cx="6.5" cy="6.5" r="6" fill="#a9afc8"/><path d="M10 6.5 H4 M6.3 3.8 L3.6 6.5 L6.3 9.2" stroke="#ccd5f0" stroke-width="1.6" fill="none"/></svg>
<svg class="abs" style="left:31px;top:31px" width="13" height="13" viewBox="0 0 13 13"><circle cx="6.5" cy="6.5" r="6" fill="#a9afc8"/><path d="M3 6.5 H9 M6.7 3.8 L9.4 6.5 L6.7 9.2" stroke="#ccd5f0" stroke-width="1.6" fill="none"/></svg>
<svg class="abs" style="left:52px;top:29px" width="15" height="15" viewBox="0 0 15 15"><path d="M0.8 8 L7.5 1.5 L14.2 8 M2.8 7 V14 H12.2 V7 M11 1.5 V4.5" fill="none" stroke="#333" stroke-width="1.4"/><rect x="6" y="9" width="3" height="5" fill="#333"/></svg>
<svg class="abs" style="left:74px;top:29px" width="16" height="16" viewBox="0 0 16 16"><rect x="6.5" y="0.5" width="9" height="12" fill="#eef1fc" stroke="#333"/><rect x="6.5" y="0.5" width="9" height="2.2" fill="#333"/><path d="M9 5.5 H14 M9 7.5 H14 M9 9.5 H14" stroke="#333"/><path d="M5.6 6.5 L8 7.5 V14 L5.6 15 L2 11.6 L0.8 12.5 L0 12 V9.5 L0.8 9 L2 9.9 Z M5.6 9 L3.6 10.75 L5.6 12.5 Z" fill="#8a4bd6" fill-rule="evenodd"/></svg>
<div class="abs" style="left:95px;top:28px;width:1px;height:20px;background:#8e9bbc"></div>
<svg class="abs" style="left:105px;top:29px" width="15" height="16" viewBox="0 0 15 16"><circle cx="9" cy="10" r="4.6" fill="none" stroke="#333" stroke-width="1.2"/><path d="M9 7.5 V10.3 H11.3" fill="none" stroke="#333" stroke-width="1.1"/><path d="M0.5 1 H5 M2.8 1 V5" stroke="#333" stroke-width="1.2"/></svg>
<svg class="abs" style="left:127px;top:35px" width="5" height="3" viewBox="0 0 5 3"><path d="M0 0 H5 L2.5 3 Z" fill="#1e1e1e"/></svg>
<svg class="abs" style="left:140px;top:30px" width="13" height="14" viewBox="0 0 13 14"><path d="M12 4 H2 M5 0.8 L1.6 4 L5 7.2 M1 10 H11 M8 6.8 L11.4 10 L8 13.2" fill="none" stroke="#222" stroke-width="1.7"/></svg>
<svg class="abs" style="left:163px;top:31px" width="12" height="12" viewBox="0 0 12 12"><path d="M3.5 3 V0.5 H11.5 V7 H9" fill="none" stroke="#333"/><rect x="0.5" y="3.5" width="8" height="8" fill="#eef1fc" stroke="#333"/><path d="M2.5 7.5 H6.5" stroke="#00539c" stroke-width="1.4"/></svg>
<svg class="abs" style="left:183px;top:29px" width="15" height="15" viewBox="0 0 15 15"><path d="M3 12.5 H1 V0.5 H7.5 L9 2" fill="none" stroke="#333"/><path d="M4.5 3.5 H10.5 L13.5 6.5 V14.5 H4.5 Z" fill="#eef1fc" stroke="#333"/><path d="M6.5 8.5 H11.5 M6.5 11.5 H11.5" stroke="#333"/></svg>
<div class="abs" style="left:204px;top:28px;width:1px;height:20px;background:#8e9bbc"></div>
<svg class="abs" style="left:214px;top:32px" width="13" height="9" viewBox="0 0 13 9"><path d="M4.5 0.8 L1 4.5 L4.5 8.2 M8.5 0.8 L12 4.5 L8.5 8.2" fill="none" stroke="#222" stroke-width="1.6"/></svg>
<svg class="abs" style="left:235px;top:29px" width="15" height="15" viewBox="0 0 15 15"><path d="M1.5 13.5 L8 7" stroke="#222" stroke-width="2.6" stroke-linecap="round"/><path d="M13.8 3.2 L11.5 5.5 L9.5 3.5 L11.8 1.2 C9 0.2 6.3 2.5 7.3 5.5 C8.5 8.5 12 8.2 13.5 6.3 C14.2 5.3 14.2 4.2 13.8 3.2 Z" fill="#222"/></svg>
<div class="abs" style="left:253px;top:25px;width:22px;height:24px;background:#ffecc4;border:1px solid #e5c365"></div>
<div class="abs" style="left:257px;top:38px;width:14px;height:1.5px;background:#222"></div><div class="abs" style="left:262px;top:35px;width:9px;height:4px;background:#222"></div>
<div class="abs" style="left:0;top:51px;width:346px;height:23px;background:#fff;border-bottom:1px solid #ccd5f0"></div>
<div class="abs ui" style="left:4px;top:55px;line-height:16px;color:#6a6f80">搜索解决方案资源管理器(Ctrl+;)</div>
<svg class="abs" style="left:319px;top:55px" width="13" height="13" viewBox="0 0 13 13"><circle cx="8" cy="4.8" r="3.2" fill="none" stroke="#444" stroke-width="1.7"/><path d="M5.8 7.2 L1 12" stroke="#444" stroke-width="2"/></svg>
<svg class="abs" style="left:336px;top:61px" width="5" height="3" viewBox="0 0 5 3"><path d="M0 0 H5 L2.5 3 Z" fill="#6a6f80"/></svg>
<div class="abs" style="left:0;top:95px;width:346px;height:19px;background:#e8e8f0"></div><div class="abs" style="left:0;top:654px;width:346px;height:4px;background:#cdced5"></div>
<svg class="abs" style="left:13px;top:79.5px" width="15" height="13" viewBox="0 0 15 13"><path d="M2 4 V0.8 H14 V10.5 H10" fill="none" stroke="#333" stroke-width="1.2"/><path d="M2 0.8 H14 V2.6 H2 Z" fill="#333"/><path d="M5.6 4.5 L8 5.5 V12 L5.6 13 L2 9.6 L0.8 10.5 L0 10 V7.5 L0.8 7 L2 7.9 Z M5.6 7 L3.6 8.75 L5.6 10.5 Z" fill="#8a4bd6" fill-rule="evenodd"/></svg><div class="abs ui" style="left:33px;top:79.2px;line-height:16px;letter-spacing:0.2px">解决方案"Project_01_25"(1 个项目/共 1 个)</div><svg class="abs" style="left:11px;top:101.5px" width="8" height="8" viewBox="0 0 7 7"><path d="M6.5 0.2 V6.5 H0.2 Z" fill="#1e1e1e"/></svg><svg class="abs" style="left:30px;top:98.5px" width="15" height="13" viewBox="0 0 15 13"><rect x="0.5" y="0.5" width="14" height="12" fill="#f0f0f8" stroke="#9b4f96"/><path d="M5.2 1.3 V7.1 M2.3 4.2 H8.1 M9.6 5.7 V11.5 M6.7 8.6 H12.5" stroke="#2a2a2a" stroke-width="2.2" fill="none"/></svg><div class="abs ui" style="left:51.5px;top:98.2px;line-height:16px;font-weight:bold;">Project_01_25</div><svg class="abs" style="left:29px;top:119.0px" width="6" height="10" viewBox="0 0 6 10"><path d="M0.7 0.9 L5 5 L0.7 9.1 Z" fill="none" stroke="#1e1e1e" stroke-width="1.1"/></svg><svg class="abs" style="left:49px;top:120.5px" width="15" height="7" viewBox="0 0 15 7"><rect x="0" y="1.5" width="4" height="4" fill="#333"/><rect x="5.5" y="3" width="2" height="1.5" fill="#333"/><rect x="9" y="0.5" width="6" height="6" fill="#333"/></svg><div class="abs ui" style="left:68.5px;top:117.2px;line-height:16px;">引用</div><svg class="abs" style="left:29px;top:138.0px" width="6" height="10" viewBox="0 0 6 10"><path d="M0.7 0.9 L5 5 L0.7 9.1 Z" fill="none" stroke="#1e1e1e" stroke-width="1.1"/></svg><svg class="abs" style="left:49px;top:136.5px" width="15" height="14" viewBox="0 0 15 14"><path d="M1.5 2.5 H7.5 L8.5 0.5 H14 V10 H1.5 Z" fill="#dcb67a"/><path d="M1.5 2.5 H7.5 L8.5 0.5 H14 V3.5 H1.5 Z" fill="#cfa565"/><rect x="7" y="6.5" width="7" height="7" fill="#fff" stroke="#1a9fd8" stroke-width="1.2"/><path d="M9.3 8.7 H11.8 V11.2 M11.8 8.7 L9.2 11.3" stroke="#1a9fd8" fill="none"/></svg><div class="abs ui" style="left:68.5px;top:136.2px;line-height:16px;">外部依赖项</div><svg class="abs" style="left:49px;top:155.5px" width="15" height="13" viewBox="0 0 15 13"><path d="M1.5 2.5 H7.5 L8.5 0.5 H14.5 V10.5 H1.5 Z" fill="#dcb67a"/><path d="M1.5 2.5 H7.5 L8.5 0.5 H14.5 V3.5 H1.5 Z" fill="#cfa565"/><path d="M0 9.5 H4.4" stroke="#f5f7fd" stroke-width="3"/><path d="M0.2 9.5 H4.2 M2.2 9.5 V12.8" stroke="#444" stroke-width="1.2" fill="none"/></svg><div class="abs ui" style="left:68.5px;top:155.2px;line-height:16px;">头文件</div><svg class="abs" style="left:27px;top:177.5px" width="8" height="8" viewBox="0 0 7 7"><path d="M6.5 0.2 V6.5 H0.2 Z" fill="#1e1e1e"/></svg><svg class="abs" style="left:49px;top:174.5px" width="15" height="13" viewBox="0 0 15 13"><path d="M3.5 10 V2.5 H8 L9 0.8 H14.5 V10.2 H12" fill="none" stroke="#cfa565" stroke-width="1.2"/><path d="M1.5 10.3 L3.8 4 H12.5 L11.5 10.3 Z" fill="#ece3d0" stroke="#cfa565" stroke-width="1"/><path d="M0 9.5 H4.4" stroke="#f5f7fd" stroke-width="3"/><path d="M0.2 9.5 H4.2 M2.2 9.5 V12.8" stroke="#444" stroke-width="1.2" fill="none"/></svg><div class="abs ui" style="left:68.5px;top:174.2px;line-height:16px;">源文件</div><svg class="abs" style="left:47px;top:195.0px" width="6" height="10" viewBox="0 0 6 10"><path d="M0.7 0.9 L5 5 L0.7 9.1 Z" fill="none" stroke="#1e1e1e" stroke-width="1.1"/></svg><svg class="abs" style="left:69px;top:193.5px" width="11" height="13" viewBox="0 0 11 13"><path d="M0.5 0.5 H7 L10.5 4 V12.5 H0.5 Z" fill="#fff" stroke="#444"/><path d="M7 0.5 V4 H10.5" fill="none" stroke="#444"/><path d="M7 6.5 H4 V10 H7" fill="none" stroke="#8a4bd6" stroke-width="1.3"/></svg><div class="abs ui" style="left:87px;top:193.2px;line-height:16px;">test.c</div><svg class="abs" style="left:49px;top:212.5px" width="15" height="13" viewBox="0 0 15 13"><path d="M1.5 2.5 H7.5 L8.5 0.5 H14.5 V10.5 H1.5 Z" fill="#dcb67a"/><path d="M1.5 2.5 H7.5 L8.5 0.5 H14.5 V3.5 H1.5 Z" fill="#cfa565"/><path d="M0 9.5 H4.4" stroke="#f5f7fd" stroke-width="3"/><path d="M0.2 9.5 H4.2 M2.2 9.5 V12.8" stroke="#444" stroke-width="1.2" fill="none"/></svg><div class="abs ui" style="left:68.5px;top:212.2px;line-height:16px;">资源文件</div>
</div>
<div id="con" class="abs"><div id="contitle" class="abs">
<svg class="abs" style="left:8px;top:8px" width="17" height="13" viewBox="0 0 17 13"><rect x="0" y="0" width="17" height="13" fill="#8a8a8a"/><rect x="1" y="2" width="15" height="10" fill="#4b1f99"/></svg>
<div class="abs" style="left:11px;top:12px;font-family:'Liberation Sans',sans-serif;font-weight:bold;font-size:6.5px;line-height:7px;color:#fff;white-space:nowrap">C:\</div>
<div class="abs ui" style="left:29px;top:7px;line-height:16px;font-size:13.25px;color:#000">Microsoft Visual Studio <span style="font-size:12.2px">调试控制台</span></div>
<div class="abs" style="left:514px;top:14px;width:10px;height:1px;background:#000"></div>
<div class="abs" style="left:559px;top:9px;width:10px;height:10px;border:1px solid #000"></div>
</div>
<div class="abs con" style="top:32px">77</div>
<div class="abs con" style="top:48px">22</div>
<div class="abs con" style="top:64px">sum = 99</div>
<div class="abs con" style="top:96px">D:\<span class="cblur"></span>\Project_01_25\Debug\Project_01_25.exe <b>(进</b></div>
<div class="abs con" style="top:112px"><b>程</b> 8288)<b>已退出，代码为</b> 0<b>。</b></div>
<div class="abs con" style="top:128px"><b>按任意键关闭此窗口</b>. . .</div>
</div>
<div id="status" class="abs">
<svg class="abs" style="left:4px;top:7px" width="17" height="12" viewBox="0 0 17 12"><path d="M3.5 0.8 H16 L13.5 11.2 H1 Z" fill="none" stroke="#fff" stroke-width="1.3"/></svg>
<div class="abs ui" style="left:28px;top:5px;line-height:17px;color:#fff;font-size:12px">生成成功</div>
<svg class="abs" style="left:906px;top:6px" width="11" height="12" viewBox="0 0 11 12"><path d="M5.5 11.5 V1.5 M1.3 5.5 L5.5 1.2 L9.7 5.5" fill="none" stroke="#e6e6e6" stroke-width="1.6"/></svg>
<div class="abs ui" style="left:926px;top:5px;line-height:17px;color:#fff;font-size:12.5px">0</div>
<svg class="abs" style="left:957px;top:6px" width="12" height="12" viewBox="0 0 12 12"><path d="M0.8 11.2 L1.6 7.8 L8.4 1 L11 3.6 L4.2 10.4 Z" fill="#e6e6e6"/></svg>
<div class="abs ui" style="left:977px;top:5px;line-height:17px;color:#fff;font-size:12.5px">27</div>
<svg class="abs" style="left:1013px;top:5px" width="15" height="15" viewBox="0 0 15 15"><path d="M7.5 0.5 L14.5 7.5 L7.5 14.5 L0.5 7.5 Z" fill="#e6e6e6"/><path d="M5 5 L8 8 M7.5 4.5 V10.5" stroke="#40508d" stroke-width="1.3"/><circle cx="7.5" cy="10.3" r="1.2" fill="#40508d"/><circle cx="9" cy="7.8" r="1.2" fill="#40508d"/></svg>
<div class="abs ui" style="left:1035px;top:5px;line-height:17px;color:#fff;font-size:12.5px">Study-C</div>
<svg class="abs" style="left:1102px;top:5px" width="15" height="14" viewBox="0 0 15 14"><path d="M7.5 13.5 V7 L2 1.5 M7.5 7 L13 1.5 M1.5 4.5 V1 H5 M10 1 H13.5 V4.5" fill="none" stroke="#e6e6e6" stroke-width="1.4"/></svg>
<div class="abs ui" style="left:1124px;top:5px;line-height:17px;color:#fff;font-size:12.5px">master</div>
<svg class="abs" style="left:1170px;top:10px" width="8" height="5" viewBox="0 0 8 5"><path d="M0 5 H8 L4 0 Z" fill="#fff"/></svg>
<svg class="abs" style="left:1204px;top:5px" width="15" height="15" viewBox="0 0 15 15"><path d="M7.5 0.8 C4.5 0.8 3.5 3.5 3.5 6 C3.5 9 2.5 10 1 11 H14 C12.5 10 11.5 9 11.5 6 C11.5 3.5 10.5 0.8 7.5 0.8 Z" fill="#e6e6e6"/><rect x="5.8" y="12" width="3.4" height="2.2" rx="1" fill="#e6e6e6"/></svg>
<svg class="abs" style="left:1242px;top:12px" width="10" height="10" viewBox="0 0 10 10"><g fill="#8f9bc7"><rect x="8" y="0" width="1.3" height="1.3"/><rect x="5.5" y="2.5" width="1.3" height="1.3"/><rect x="8" y="2.5" width="1.3" height="1.3"/><rect x="3" y="5" width="1.3" height="1.3"/><rect x="5.5" y="5" width="1.3" height="1.3"/><rect x="8" y="5" width="1.3" height="1.3"/><rect x="0.5" y="7.5" width="1.3" height="1.3"/><rect x="3" y="7.5" width="1.3" height="1.3"/><rect x="5.5" y="7.5" width="1.3" height="1.3"/><rect x="8" y="7.5" width="1.3" height="1.3"/></g></svg>
</div>
</body>
</html>
